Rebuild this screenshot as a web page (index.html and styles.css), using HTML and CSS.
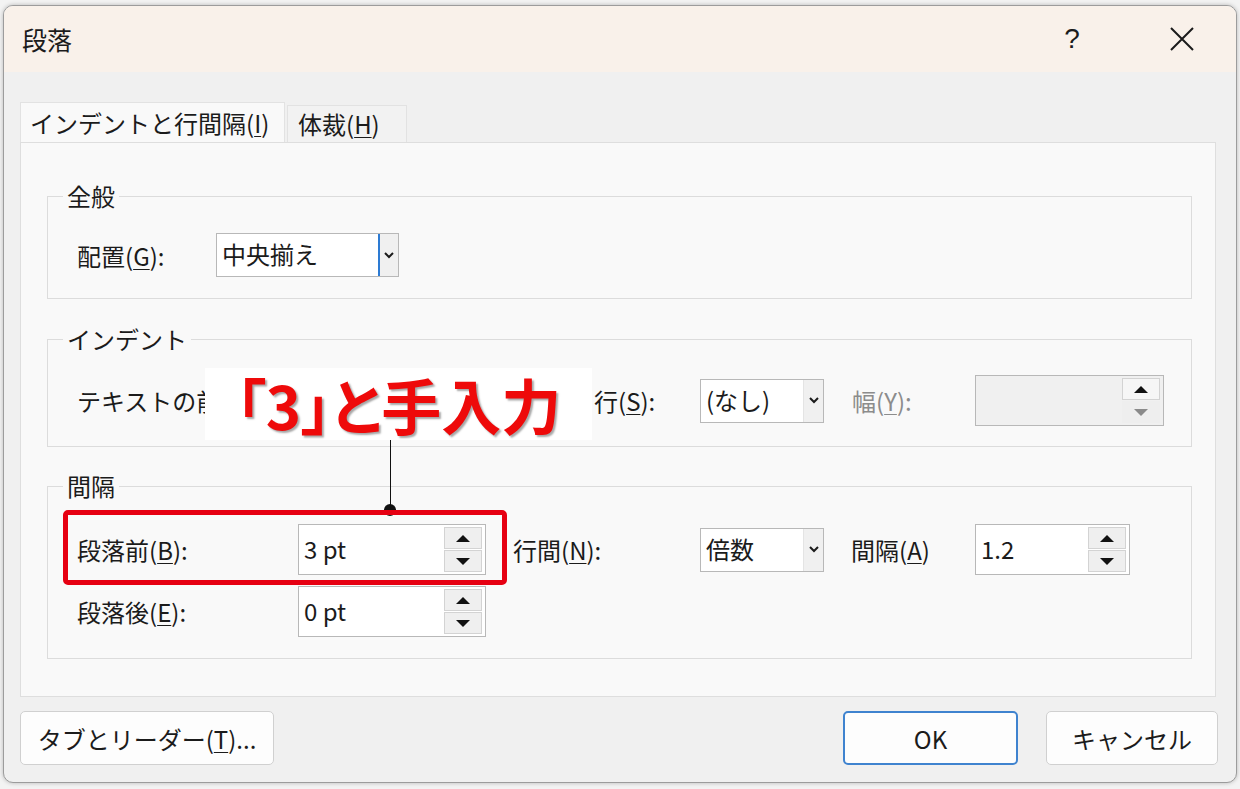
FILE: index.html
```html
<html>
  <head>
    <meta charset="utf-8" />
    <title>段落</title>
    <link rel="stylesheet" href="styles.css">
  </head>
  <body>
    <div class="page">
      <div class="dialog">
        <div class="titlebar">
          <div class="title">段落</div>
          <div class="tb-btn help">?</div>
          <div class="tb-btn close">
            <svg width="26" height="26" viewBox="0 0 26 26"><path d="M2 2 L24 24 M24 2 L2 24" stroke="#1b1b1b" stroke-width="2" fill="none"/></svg>
          </div>
        </div>

        <div class="tabs">
          <div class="tab active">インデントと行間隔(<u>I</u>)</div>
          <div class="tab second">体裁(<u>H</u>)</div>
        </div>

        <div class="panel">
          <fieldset class="group">
            <legend>全般</legend>
            <div class="row">
              <div class="lbl w139">配置(<u>G</u>):</div>
              <div class="select w183 focused">
                <div class="val">中央揃え</div>
                <div class="arrow"><svg width="10" height="7" viewBox="0 0 10 7"><path d="M1 1 L5 5 L9 1" stroke="#1b1b1b" stroke-width="2" fill="none"/></svg></div>
              </div>
            </div>
          </fieldset>

          <fieldset class="group">
            <legend>インデント</legend>
            <div class="row">
              <!-- the rest of this row sits under the callout -->
              <div class="lbl w128">テキストの前</div>
              <div class="hidden-gap"></div>
              <div class="lbl w106">行(<u>S</u>):</div>
              <div class="select w124">
                <div class="val">(なし)</div>
                <div class="arrow"><svg width="10" height="7" viewBox="0 0 10 7"><path d="M1 1 L5 5 L9 1" stroke="#1b1b1b" stroke-width="2" fill="none"/></svg></div>
              </div>
              <div class="lbl w151 pad28 dim">幅(<u>Y</u>):</div>
              <div class="spin w189 disabled">
                <div class="val"></div>
                <div class="btns">
                  <div class="sb"><span class="up"></span></div>
                  <div class="sb flat"><span class="down"></span></div>
                </div>
              </div>
            </div>
          </fieldset>

          <fieldset class="group">
            <legend>間隔</legend>
            <div class="row">
              <div class="lbl w221">段落前(<u>B</u>):</div>
              <div class="spin w188">
                <div class="val">3 pt</div>
                <div class="btns">
                  <div class="sb"><span class="up"></span></div>
                  <div class="sb"><span class="down"></span></div>
                </div>
              </div>
              <div class="lbl w214 pad27">行間(<u>N</u>):</div>
              <div class="select w124">
                <div class="val">倍数</div>
                <div class="arrow"><svg width="10" height="7" viewBox="0 0 10 7"><path d="M1 1 L5 5 L9 1" stroke="#1b1b1b" stroke-width="2" fill="none"/></svg></div>
              </div>
              <div class="lbl w151 pad27">間隔(<u>A</u>)</div>
              <div class="spin w155">
                <div class="val">1.2</div>
                <div class="btns">
                  <div class="sb"><span class="up"></span></div>
                  <div class="sb"><span class="down"></span></div>
                </div>
              </div>
            </div>
            <div class="row second">
              <div class="lbl w221">段落後(<u>E</u>):</div>
              <div class="spin w188">
                <div class="val">0 pt</div>
                <div class="btns">
                  <div class="sb"><span class="up"></span></div>
                  <div class="sb"><span class="down"></span></div>
                </div>
              </div>
            </div>
          </fieldset>
        </div>

        <div class="footer">
          <div class="btn tabs-btn">タブとリーダー(<u>T</u>)...</div>
          <div class="right">
            <div class="btn ok">OK</div>
            <div class="btn cancel">キャンセル</div>
          </div>
        </div>
      </div>

      <!-- annotation over the dialog -->
      <div class="callout">「3」と手入力</div>
      <div class="leader"></div>
      <div class="dot"></div>
      <div class="redbox"></div>
    </div>
  </body>
</html>
```

FILE: styles.css
```css
* {
  margin: 0;
  padding: 0;
  box-sizing: border-box;
}
body {
  background: #f3f3f3;
  font-family: "Noto Sans CJK JP", "Noto Sans", sans-serif;
  color: #1b1b1b;
}
u {
  text-underline-offset: 3px;
  text-decoration-thickness: 1px;
}
.page {
  position: relative;
  width: 1240px;
  height: 789px;
  padding: 5px 3px 0 3px;
  overflow: hidden;
}
.dialog {
  width: 1234px;
  height: 778px;
  border: 1px solid #9c9c9c;
  border-radius: 10px;
  background: #f0f0f0;
  overflow: hidden;
  box-shadow: 0 0 4px rgba(0, 0, 0, 0.25);
}
.titlebar {
  height: 66px;
  background: #f9f1ea;
  display: flex;
  align-items: center;
  padding: 0 31px 0 18px;
}
.title {
  font-size: 25px;
  flex: 1;
}
.tb-btn {
  width: 46px;
  height: 40px;
  display: flex;
  align-items: center;
  justify-content: center;
}
.help {
  font-size: 28px;
  font-family: "Liberation Sans", sans-serif;
  font-weight: 300;
  margin-right: 64px;
}
.tabs {
  display: flex;
  align-items: flex-end;
  height: 40px;
  margin: 30px 0 0 16px;
}
.tab {
  height: 37px;
  padding: 0 10px;
  font-size: 24px;
  line-height: 36px;
  border: 1px solid #e2e2e2;
  border-bottom: none;
  background: #f2f2f2;
  margin-left: 2px;
}
.tab.second {
  width: 120px;
}
.tab.active {
  height: 40px;
  line-height: 40px;
  width: 265px;
  padding: 0 9px;
  background: #f9f9f9;
  margin-left: 0;
}
.panel {
  width: 1196px;
  height: 555px;
  margin-left: 16px;
  background: #f9f9f9;
  border: 1px solid #dedede;
  padding: 38px 23px 0 26px;
}
.group {
  border: 1px solid #dcdcdc;
  padding: 0 0 21px 29px;
  margin-top: 25px;
}
.group:first-child {
  margin-top: 0;
}
.group legend {
  font-size: 24px;
  line-height: 30px;
  margin-left: -14px;
  padding: 0 4px;
}
.row {
  display: flex;
  align-items: center;
  margin-top: 22px;
  min-height: 44px;
}
.group:nth-child(2) {
  padding-bottom: 20px;
  margin-top: 25px;
}
.group:nth-child(2) .row {
  margin-top: 21px;
  min-height: 51px;
}
.group:nth-child(3) {
  margin-top: 24px;
}
.group:nth-child(3) .row {
  margin-top: 23px;
}
.group:nth-child(3) .row.second {
  margin-top: 11px;
}
.lbl {
  font-size: 24px;
  white-space: nowrap;
  flex-shrink: 0;
}
.lbl.dim {
  color: #8c8c8c;
}
.hidden-gap {
  width: 389px;
  flex-shrink: 0;
}
.w106 { width: 106px; }
.w128 { width: 128px; }
.w139 { width: 139px; }
.w221 { width: 221px; }
.w214 { width: 214px; }
.w151 { width: 151px; }
.w183 { width: 183px; }
.w124 { width: 124px; }
.w188 { width: 188px; }
.w189 { width: 189px; }
.w155 { width: 155px; }
.pad27 { padding-left: 27px; }
.pad28 { padding-left: 28px; }

.select {
  height: 44px;
  border: 1px solid #b8b8b8;
  background: #fff;
  display: flex;
  flex-shrink: 0;
}
.select .val {
  flex: 1;
  font-size: 24px;
  line-height: 40px;
  padding-left: 5px;
  white-space: nowrap;
}
.select .arrow {
  width: 20px;
  background: #f0f0f0;
  border-left: 1px solid #e4e4e4;
  display: flex;
  align-items: center;
  justify-content: center;
}
.select.focused .arrow {
  border-left: 2px solid #2d7bd3;
}
.spin {
  height: 51px;
  border: 1px solid #b8b8b8;
  background: #fff;
  display: flex;
  flex-shrink: 0;
}
.spin .val {
  flex: 1;
  font-size: 24px;
  line-height: 48px;
  padding-left: 5px;
}
.spin .btns {
  width: 41px;
  padding: 2px 3px 2px 0;
  display: flex;
  flex-direction: column;
  gap: 1px;
}
.sb {
  flex: 1;
  background: #efefef;
  border: 1px solid #d3d3d3;
  display: flex;
  align-items: center;
  justify-content: center;
}
.up {
  width: 0;
  height: 0;
  border-left: 7px solid transparent;
  border-right: 7px solid transparent;
  border-bottom: 7px solid #111;
}
.down {
  width: 0;
  height: 0;
  border-left: 7px solid transparent;
  border-right: 7px solid transparent;
  border-top: 7px solid #111;
}
.spin.disabled {
  background: #f0f0f0;
}
.spin.disabled .sb {
  background: #f6f6f6;
}
.spin.disabled .sb.flat {
  border-color: transparent;
  background: #eeeeee;
}
.spin.disabled .down {
  border-top-color: #8a8a8a;
}

.footer {
  display: flex;
  justify-content: space-between;
  padding: 14px 18px 0 16px;
}
.btn {
  height: 54px;
  background: #fdfdfd;
  border: 1px solid #d0d0d0;
  border-radius: 5px;
  font-size: 24px;
  display: flex;
  align-items: center;
  justify-content: center;
}
.tabs-btn {
  width: 254px;
}
.right {
  display: flex;
  gap: 28px;
}
.ok {
  width: 175px;
  border: 2px solid #3f83cf;
}
.cancel {
  width: 172px;
}

.callout {
  position: absolute;
  left: 205px;
  top: 368px;
  width: 387px;
  height: 72px;
  background: #fff;
  color: #ee0a0a;
  font-size: 60px;
  font-weight: 700;
  line-height: 72px;
  text-align: center;
  font-feature-settings: "palt";
  text-shadow: 2px 2px 2px rgba(0, 0, 0, 0.35);
}
.leader {
  position: absolute;
  left: 390px;
  top: 440px;
  width: 1px;
  height: 70px;
  background: #111;
}
.dot {
  position: absolute;
  left: 384px;
  top: 504px;
  width: 12px;
  height: 12px;
  border-radius: 50%;
  background: #111;
}
.redbox {
  position: absolute;
  left: 63px;
  top: 510px;
  width: 444px;
  height: 75px;
  border: 5px solid #e60012;
  border-radius: 5px;
}
```
